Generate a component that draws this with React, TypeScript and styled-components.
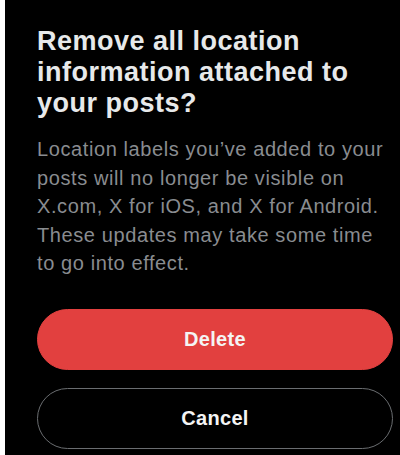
import React from "react";
import styled, { createGlobalStyle } from "styled-components";

const Global = createGlobalStyle`
  html, body { margin: 0; padding: 0; background: #ffffff; }
  body { font-family: "Liberation Sans", Arial, sans-serif; }
  * { box-sizing: border-box; }
`;

const Page = styled.div`
  width: 400px;
  height: 455px;
  padding-left: 5px;
  background: #ffffff;
  overflow: hidden;
`;

const Dialog = styled.div`
  width: 395px;
  height: 455px;
  background: #000000;
  padding: 26px 7px 0 32px;
  display: flex;
  flex-direction: column;
`;

const Title = styled.h1`
  margin: 0;
  color: #e7e9ea;
  font-family: "Liberation Sans", Arial, sans-serif;
  font-weight: 700;
  font-size: 27px;
  line-height: 31px;
  letter-spacing: 0.5px;
  white-space: nowrap;
`;

const Body = styled.p`
  margin: 16px 0 0;
  color: #898c90;
  font-family: "Liberation Sans", Arial, sans-serif;
  font-size: 20px;
  line-height: 28.5px;
  letter-spacing: 0.6px;
  white-space: nowrap;
`;

const Actions = styled.div`
  display: flex;
  flex-direction: column;
  gap: 18px;
  margin-top: 31px;
  width: 356px;
`;

const Button = styled.button<{ $variant: "danger" | "outline" }>`
  height: 61px;
  border-radius: 31px;
  border: 1px solid ${(p) => (p.$variant === "danger" ? "#e2403f" : "#6a6d70")};
  background: ${(p) => (p.$variant === "danger" ? "#e2403f" : "transparent")};
  color: #f4f4f4;
  font-family: "Liberation Sans", Arial, sans-serif;
  font-weight: 700;
  font-size: 20px;
  letter-spacing: 0.3px;
  display: flex;
  align-items: center;
  justify-content: center;
  padding: 0;
`;

export default function App() {
  return (
    <>
      <Global />
      <Page>
        <Dialog>
          <Title>
            Remove all location
            <br />
            information attached to
            <br />
            your posts?
          </Title>
          <Body>
            Location labels you’ve added to your
            <br />
            posts will no longer be visible on
            <br />
            X.com, X for iOS, and X for Android.
            <br />
            These updates may take some time
            <br />
            to go into effect.
          </Body>
          <Actions>
            <Button $variant="danger">Delete</Button>
            <Button $variant="outline">Cancel</Button>
          </Actions>
        </Dialog>
      </Page>
    </>
  );
}
